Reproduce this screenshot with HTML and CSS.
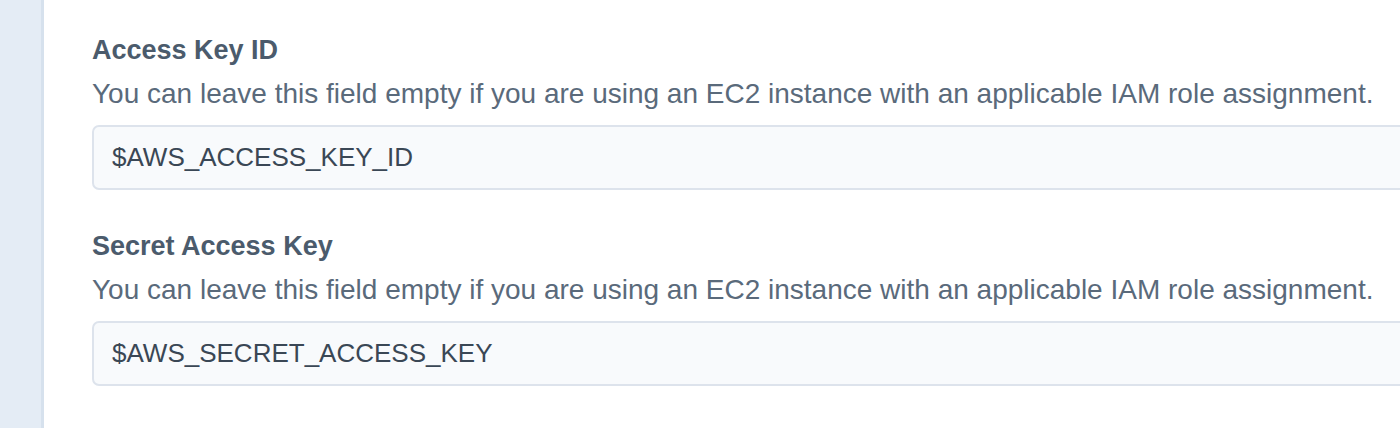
FILE: index.html
```html
<!DOCTYPE html>
<html>
<head>
<meta charset="utf-8">
<link rel="stylesheet" href="styles.css">
</head>
<body>
<div class="layout">
  <aside class="sidebar"></aside>
  <main class="content">
    <div class="field">
      <label class="label">Access Key ID</label>
      <p class="help">You can leave this field empty if you are using an EC2 instance with an applicable IAM role assignment.</p>
      <div class="input">$AWS_ACCESS_KEY_ID</div>
    </div>
    <div class="field">
      <label class="label">Secret Access Key</label>
      <p class="help">You can leave this field empty if you are using an EC2 instance with an applicable IAM role assignment.</p>
      <div class="input">$AWS_SECRET_ACCESS_KEY</div>
    </div>
  </main>
</div>
</body>
</html>
```
FILE: styles.css
```css
html, body {
  margin: 0;
  padding: 0;
  background: #ffffff;
  font-family: "Liberation Sans", Arial, sans-serif;
}
.layout {
  display: flex;
  height: 428px;
  overflow: hidden;
}
.sidebar {
  width: 41px;
  flex: none;
  background: #e4ecf5;
  border-right: 3px solid #d6e1ed;
}
.content {
  flex: 1;
  padding: 33px 0 0 48px;
  overflow: hidden;
}
.field {
  margin-bottom: 39px;
  width: 1400px;
}
.label {
  display: block;
  font-weight: bold;
  font-size: 27px;
  line-height: 34px;
  color: #4b5b6c;
}
.help {
  margin: 9px 0 13px;
  font-size: 28px;
  line-height: 36px;
  color: #5a6a7b;
  white-space: nowrap;
}
.input {
  box-sizing: border-box;
  height: 65px;
  border: 2px solid #dde3ec;
  border-radius: 7px;
  background: #f8fafc;
  padding: 0 18px;
  display: flex;
  align-items: center;
  font-size: 26px;
  color: #3a4755;
}
```
